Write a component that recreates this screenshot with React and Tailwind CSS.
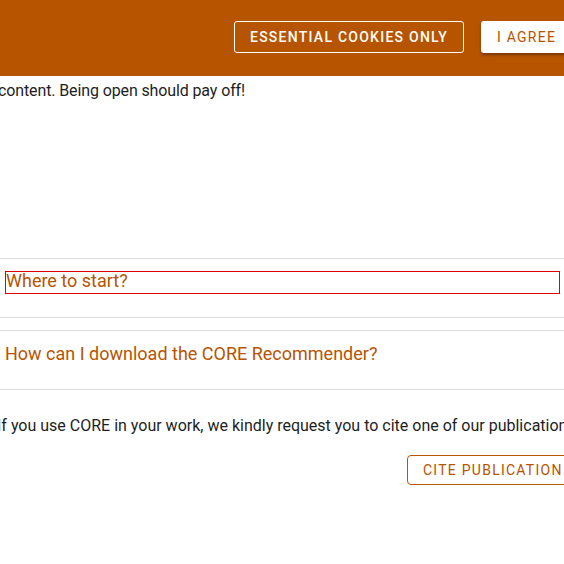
export default function App() {
  const font = { fontFamily: "Roboto, 'Liberation Sans', sans-serif" };
  return (
    <div className="w-[564px] h-[564px] overflow-hidden bg-white relative" style={font}>
      <header className="h-[76px] bg-[#b75400] flex items-start pt-[21px] pl-[234px] gap-[17px]">
        <button className="h-[32px] w-[230px] shrink-0 border border-white rounded-[3px] text-white text-[14px] leading-[28px] font-medium tracking-[1.25px] uppercase">
          Essential cookies only
        </button>
        <button className="h-[32px] shrink-0 bg-white rounded-[3px] px-[16px] text-[#b75400] text-[14px] leading-[28px] tracking-[1.25px] uppercase shadow-[0_2px_3px_rgba(0,0,0,0.35)]">
          I agree
        </button>
      </header>
      <p className="ml-[-2px] mt-[3px] whitespace-nowrap text-[16px] leading-[24px] tracking-[-0.12px] text-[#1e1e1e]">
        content. Being open should pay off!
      </p>
      <div className="mt-[155px] border-t border-[#e0e0e0]">
        <div className="pt-[12px] pb-[23px] pl-[5px] pr-[4px]">
          <div className="h-[23px] border border-[#e00000] text-[18px] leading-[18px] text-[#b75400] whitespace-nowrap">
            Where to start?
          </div>
        </div>
      </div>
      <div className="border-t border-[#e0e0e0]" />
      <div className="mt-[12px] border-t border-[#e0e0e0] border-b">
        <div className="h-[58px] pt-[12px] pl-[5px] text-[18px] leading-[22px] text-[#b75400] whitespace-nowrap">
          How can I download the CORE Recommender?
        </div>
      </div>
      <p className="mt-[24px] ml-[-3px] whitespace-nowrap text-[16px] leading-[24px] text-[#1e1e1e]">
        If you use CORE in your work, we kindly request you to cite one of our publications.
      </p>
      <div className="mt-[17px] pl-[407px]">
        <button className="h-[30px] border border-[#b75400] rounded-[4px] px-[15px] text-[14px] leading-[22px] tracking-[1.25px] uppercase text-[#b75400] whitespace-nowrap">
          Cite publication
        </button>
      </div>
    </div>
  );
}
